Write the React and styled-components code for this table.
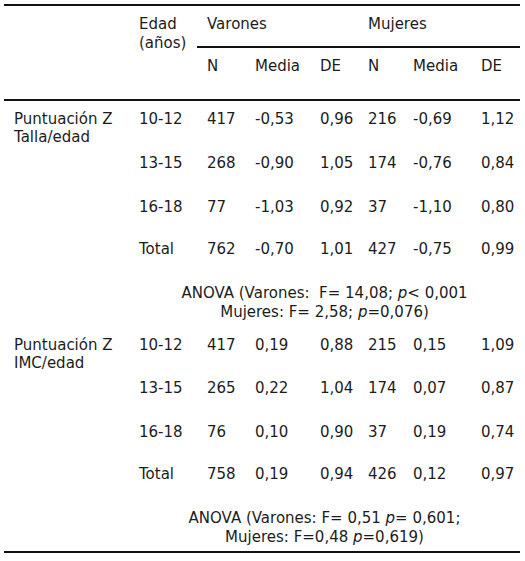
import styled, { createGlobalStyle } from "styled-components";

const GlobalStyle = createGlobalStyle`
  body {
    margin: 0;
    background: #fff;
    font-family: "DejaVu Sans", "Liberation Sans", sans-serif;
    color: #1c1c1c;
  }
`;

const Wrap = styled.div`
  padding: 4px 5px 0 4px;
`;

const Table = styled.table`
  width: 516px;
  table-layout: fixed;
  border-collapse: collapse;
  font-size: 15px;
  line-height: 19px;
  border-top: 2px solid #111;
  border-bottom: 2px solid #111;
`;

const Head = styled.thead`
  border-bottom: 2px solid #111;
`;

const Row = styled.tr`
  height: ${(p) => p.$h}px;
`;

const Th = styled.th`
  font-weight: 400;
  text-align: left;
  vertical-align: top;
  padding: 9px 0 0 10px;
  border-bottom: ${(p) => (p.$rule ? "2px solid #111" : "none")};
`;

const Td = styled.td`
  vertical-align: top;
  padding: 9px 0 0 10px;
  white-space: nowrap;
`;

/* two-line row label: only its first line takes room in the row */
const Label = styled.span`
  display: block;
  line-height: 18px;
  margin-bottom: -18px;
`;

const Note = styled.td`
  vertical-align: top;
  text-align: center;
  padding: 9px 0 0;
  white-space: pre;
`;

const widths = [125, 68, 48, 65, 48, 45, 68, 49];

const blocks = [
  {
    label: ["Puntuación Z", "Talla/edad"],
    heights: [45, 44, 42, 44, 52],
    rows: [
      ["10-12", "417", "-0,53", "0,96", "216", "-0,69", "1,12"],
      ["13-15", "268", "-0,90", "1,05", "174", "-0,76", "0,84"],
      ["16-18", "77", "-1,03", "0,92", "37", "-1,10", "0,80"],
      ["Total", "762", "-0,70", "1,01", "427", "-0,75", "0,99"],
    ],
    note: (
      <>
        ANOVA (Varones:{"  "}F= 14,08; <i>p</i>&lt; 0,001
        <br />
        Mujeres: F= 2,58; <i>p</i>=0,076)
      </>
    ),
  },
  {
    label: ["Puntuación Z", "IMC/edad"],
    heights: [43, 44, 42, 44, 52],
    rows: [
      ["10-12", "417", "0,19", "0,88", "215", "0,15", "1,09"],
      ["13-15", "265", "0,22", "1,04", "174", "0,07", "0,87"],
      ["16-18", "76", "0,10", "0,90", "37", "0,19", "0,74"],
      ["Total", "758", "0,19", "0,94", "426", "0,12", "0,97"],
    ],
    note: (
      <>
        ANOVA (Varones: F= 0,51 <i>p</i>= 0,601;
        <br />
        Mujeres: F=0,48 <i>p</i>=0,619)
      </>
    ),
  },
];

export default function App() {
  return (
    <Wrap>
      <GlobalStyle />
      <Table>
        <colgroup>
          {widths.map((w, i) => (
            <col key={i} style={{ width: w }} />
          ))}
        </colgroup>
        <Head>
          <Row $h={42}>
            <Th rowSpan={2} />
            <Th rowSpan={2}>
              Edad
              <br />
              (años)
            </Th>
            <Th colSpan={3} $rule>
              Varones
            </Th>
            <Th colSpan={3} $rule>
              Mujeres
            </Th>
          </Row>
          <Row $h={53}>
            <Th>N</Th>
            <Th>Media</Th>
            <Th>DE</Th>
            <Th>N</Th>
            <Th>Media</Th>
            <Th>DE</Th>
          </Row>
        </Head>
        {blocks.map((b, bi) => (
          <tbody key={bi}>
            {b.rows.map((r, ri) => (
              <Row key={ri} $h={b.heights[ri]}>
                <Td>
                  {ri === 0 && (
                    <Label>
                      {b.label[0]}
                      <br />
                      {b.label[1]}
                    </Label>
                  )}
                </Td>
                {r.map((v, ci) => (
                  <Td key={ci}>{v}</Td>
                ))}
              </Row>
            ))}
            <Row $h={b.heights[4]}>
              <Td />
              <Note colSpan={7}>{b.note}</Note>
            </Row>
          </tbody>
        ))}
      </Table>
    </Wrap>
  );
}
